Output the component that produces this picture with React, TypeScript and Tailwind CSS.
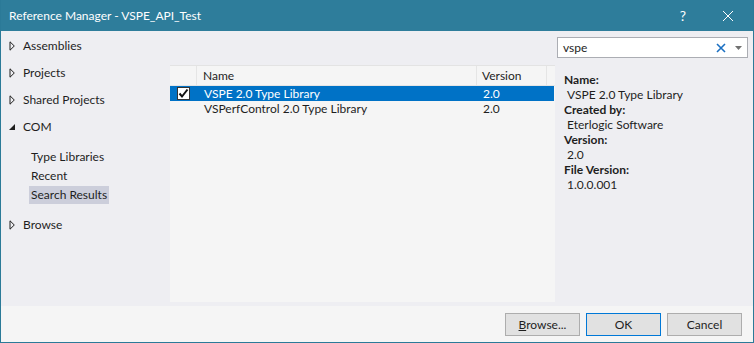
import React from 'react';

const font = { fontFamily: 'Lato, "Noto Sans", "Liberation Sans", sans-serif' };

function Arrow({ open }: { open?: boolean }) {
  if (open) {
    return (
      <svg width="6" height="6" viewBox="0 0 6 6" className="ml-[8px] mr-[8px]">
        <path d="M6 0 L6 6 L0 6 Z" fill="#1e1e1e" />
      </svg>
    );
  }
  return (
    <svg width="6" height="10" viewBox="0 0 6 10" className="ml-[8px] mr-[8px]">
      <path d="M1 0.8 L5.3 5 L1 9.2 Z" fill="none" stroke="#1e1e1e" strokeWidth="1" />
    </svg>
  );
}

function TreeRow({ label, open }: { label: string; open?: boolean }) {
  return (
    <div className="h-[27px] flex items-center text-[12px] text-[#1e1e1e]">
      <Arrow open={open} />
      <span>{label}</span>
    </div>
  );
}

function CheckBox() {
  return (
    <svg width="13" height="13" viewBox="0 0 13 13">
      <rect x="0.5" y="0.5" width="12" height="12" fill="#ffffff" stroke="#333333" />
      <path d="M2.5 6.5 L5 9.5 L10.5 2.5" fill="none" stroke="#111111" strokeWidth="2" />
    </svg>
  );
}

function Button({ label, primary }: { label: React.ReactNode; primary?: boolean }) {
  return (
    <button
      className={
        primary
          ? 'w-[75px] h-[23px] bg-[#e1e1e1] border border-[#0078d7] text-[12px] text-[#1e1e1e]'
          : 'w-[75px] h-[23px] bg-[#e1e1e1] border border-[#adadad] text-[12px] text-[#1e1e1e]'
      }
    >
      {label}
    </button>
  );
}

export default function App() {
  return (
    <div
      style={font}
      className="w-[754px] h-[343px] flex flex-col border-x border-b border-[#2b7a98] bg-[#eeeef2] overflow-hidden"
    >
      {/* title bar */}
      <div className="h-[31px] -mx-px bg-[#2e7d9b] flex items-center text-white text-[12px]">
        <span className="ml-[9px]">Reference Manager - VSPE_API_Test</span>
        <span className="ml-auto mr-[36px] text-[14px]">?</span>
        <svg width="12" height="12" viewBox="0 0 12 12" className="mr-[20px]">
          <path d="M1 1 L11 11 M11 1 L1 11" stroke="#ffffff" strokeWidth="1" />
        </svg>
      </div>

      {/* body */}
      <div className="flex-1 flex">
        {/* left tree */}
        <div className="w-[169px] pt-[1px]">
          <TreeRow label="Assemblies" />
          <TreeRow label="Projects" />
          <TreeRow label="Shared Projects" />
          <TreeRow label="COM" open />
          <div className="mt-[7px] pl-[28px] text-[12px] text-[#1e1e1e]">
            <div className="h-[19px] flex items-center"><span className="px-[2px]">Type Libraries</span></div>
            <div className="h-[19px] flex items-center"><span className="px-[2px]">Recent</span></div>
            <div className="h-[19px] flex items-center">
              <span className="px-[2px] h-[18px] flex items-center bg-[#cccedb]">Search Results</span>
            </div>
          </div>
          <div className="mt-[7px]">
            <TreeRow label="Browse" />
          </div>
        </div>

        {/* list */}
        <div className="w-[385px] pt-[34px] pb-[4px] flex">
          <div className="flex-1 bg-[#f5f5f5] border-t border-[#e3e3e3] text-[12px] leading-[15px] text-[#1e1e1e]">
            <div className="h-[20px] flex border-b border-[#e5e5e5]">
              <div className="w-[27px] border-r border-[#e5e5e5]" />
              <div className="w-[280px] border-r border-[#e5e5e5] pl-[6px] flex items-center">Name</div>
              <div className="w-[70px] border-r border-[#e5e5e5] pl-[5px] flex items-center">Version</div>
            </div>
            <div className="h-[15px] flex items-center bg-[#0072c6] text-white mr-[1px]">
              <div className="w-[27px] pl-[7px] flex items-center"><CheckBox /></div>
              <div className="w-[280px] pl-[7px]">VSPE 2.0 Type Library</div>
              <div className="pl-[6px]">2.0</div>
            </div>
            <div className="h-[15px] flex items-center">
              <div className="w-[27px]" />
              <div className="w-[280px] pl-[7px]">VSPerfControl 2.0 Type Library</div>
              <div className="pl-[6px]">2.0</div>
            </div>
          </div>
        </div>

        {/* details */}
        <div className="flex-1 pl-[2px] pt-[6px] pr-[5px]">
          <div className="h-[21px] bg-white border border-[#abadb3] flex items-center text-[12px] text-[#1e1e1e]">
            <span className="pl-[5px]">vspe</span>
            <svg width="10" height="10" viewBox="0 0 10 10" className="ml-auto mr-[9px]">
              <path d="M1 1 L9 9 M9 1 L1 9" stroke="#1a6fc2" strokeWidth="1.6" />
            </svg>
            <svg width="7" height="4" viewBox="0 0 7 4" className="mr-[5px]">
              <path d="M0 0 L7 0 L3.5 4 Z" fill="#717171" />
            </svg>
          </div>
          <div className="mt-[14px] pl-[7px] text-[12px] leading-[15px] text-[#1e1e1e]">
            <div className="font-bold">Name:</div>
            <div className="pl-[3px]">VSPE 2.0 Type Library</div>
            <div className="font-bold">Created by:</div>
            <div className="pl-[3px]">Eterlogic Software</div>
            <div className="font-bold">Version:</div>
            <div className="pl-[3px]">2.0</div>
            <div className="font-bold">File Version:</div>
            <div className="pl-[3px]">1.0.0.001</div>
          </div>
        </div>
      </div>

      {/* buttons */}
      <div className="h-[36px] bg-[#f5f5f5] flex items-center justify-end gap-[6px] pr-[11px] pt-[1px]">
        <Button label={<span><span className="underline">B</span>rowse...</span>} />
        <Button label="OK" primary />
        <Button label="Cancel" />
      </div>
    </div>
  );
}
